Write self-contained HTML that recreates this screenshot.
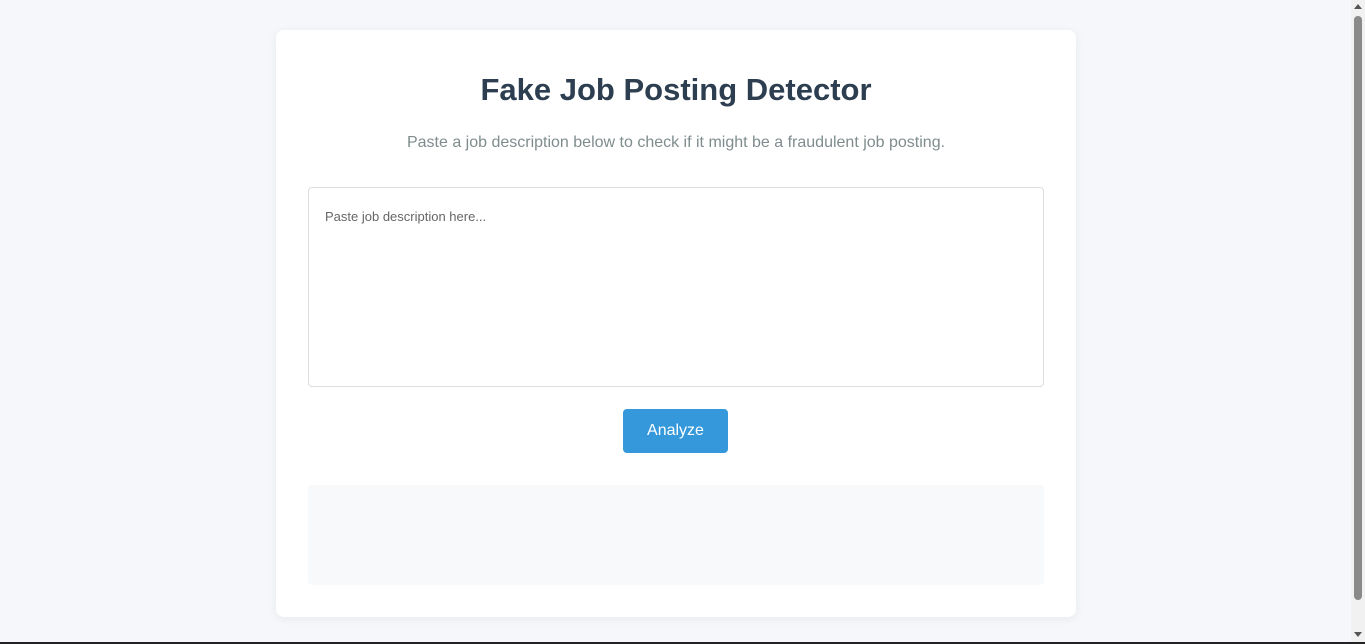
<!DOCTYPE html>
<html><head><style>
html,body{margin:0;height:644px;overflow:hidden;background:#f5f7fa;font-family:"Liberation Sans",sans-serif}
.sb{position:absolute;right:0;top:0;width:14px;height:642px;background:#f1f1f1}
.sb .th{position:absolute;left:3px;top:16px;width:8px;height:584px;background:#8a8a8a;border-radius:4px}
.sb .up{position:absolute;left:3px;top:4px;border:4px solid transparent;border-bottom:5px solid #555;border-top:0}
.sb .dn{position:absolute;left:3px;top:632px;border:4px solid transparent;border-top:5px solid #555;border-bottom:0}
.bl{position:absolute;left:0;top:642px;width:1365px;height:2px;background:#222}
.card{position:absolute;left:276px;top:30px;width:800px;height:587px;background:#fff;border-radius:8px;box-shadow:0 2px 10px rgba(0,0,0,.06)}
h1{position:absolute;top:42px;left:0;width:800px;margin:0;text-align:center;font-size:31px;color:#2c3e50;font-weight:bold}
p{position:absolute;top:104px;left:0;width:800px;margin:0;text-align:center;font-size:16px;color:#7f8c8d}
.ta{position:absolute;left:32px;top:157px;width:734px;height:198px;border:1px solid #ddd;border-radius:4px;font-size:13px;color:#666}
.ta span{position:absolute;left:16px;top:21px}
.btn{position:absolute;left:347px;top:379px;width:105px;height:44px;background:#3498db;border-radius:4px;color:#fff;font-size:16px;text-align:center;line-height:44px}
.res{position:absolute;left:32px;top:455px;width:736px;height:100px;background:#f8f9fa;border-radius:4px}
</style></head><body>
<div class="card">
<h1>Fake Job Posting Detector</h1>
<p>Paste a job description below to check if it might be a fraudulent job posting.</p>
<div class="ta"><span>Paste job description here...</span></div>
<div class="btn">Analyze</div>
<div class="res"></div>
</div>
<div class="sb"><div class="up"></div><div class="th"></div><div class="dn"></div></div>
<div class="bl"></div>
</body></html>
